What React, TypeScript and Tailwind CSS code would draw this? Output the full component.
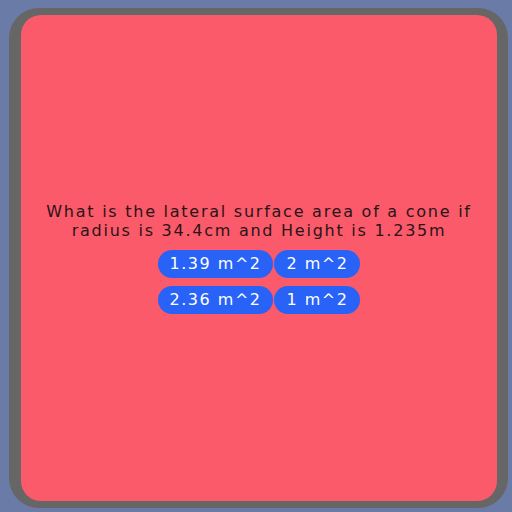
const answers = [["1.39 m^2", "2 m^2"], ["2.36 m^2", "1 m^2"]];

export default function App() {
  return (
    <div className="w-[512px] h-[512px] bg-[#6b7ba8] pt-[8px] pl-[9px] pr-[4px] pb-[4px]">
      <div className="h-full w-full rounded-[30px] bg-[#666666] pl-[12px] pr-[11px] pt-[7px] pb-[7px]">
        <div
          className="h-full w-full rounded-[20px] bg-[#fa5a6a] flex flex-col items-center justify-center"
          style={{ fontFamily: '"DejaVu Sans", sans-serif' }}
        >
          <p className="text-[16px] leading-[19px] tracking-[1.75px] text-[#2b1418] text-center whitespace-nowrap mb-[10px]">
            What is the lateral surface area of a cone if
            <br />
            radius is 34.4cm and Height is 1.235m
          </p>
          <div className="flex flex-col gap-[8px]">
            {answers.map((row, i) => (
              <div key={i} className="flex justify-center gap-[1px]">
                {row.map((a) => (
                  <button
                    key={a}
                    className="h-[28px] px-[12px] rounded-full bg-[#2962f6] text-white text-[16px] tracking-[1.5px]"
                  >
                    {a}
                  </button>
                ))}
              </div>
            ))}
          </div>
        </div>
      </div>
    </div>
  );
}
